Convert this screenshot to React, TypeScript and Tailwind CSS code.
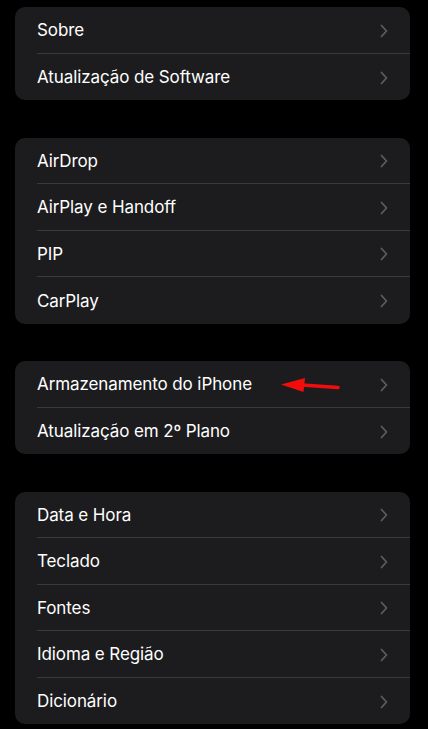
import React from 'react';

// Settings groups (Geral)
const groups: string[][] = [
  ['Sobre', 'Atualização de Software'],
  ['AirDrop', 'AirPlay e Handoff', 'PIP', 'CarPlay'],
  ['Armazenamento do iPhone', 'Atualização em 2º Plano'],
  ['Data e Hora', 'Teclado', 'Fontes', 'Idioma e Região', 'Dicionário'],
];

const Chevron: React.FC = () => (
  <svg width="8" height="14" viewBox="0 0 8 14" fill="none" className="shrink-0">
    <path d="M1.5 1.5L6.5 7L1.5 12.5" stroke="#5b5b60" strokeWidth="1.8" strokeLinecap="round" strokeLinejoin="round" />
  </svg>
);

// red annotation arrow drawn over the storage row
const RedArrow: React.FC = () => (
  <svg className="absolute left-[263px] top-[16px]" width="66" height="20" viewBox="0 0 66 20" fill="none">
    <path d="M24 8L60 10.5" stroke="#f20d0d" strokeWidth="3.6" strokeLinecap="round" />
    <path d="M3 7.5L27 1L25.5 15Z" fill="#f20d0d" />
  </svg>
);

const App: React.FC = () => {
  return (
    <div className="w-[428px] h-[729px] bg-black overflow-hidden pt-[7px] px-[15px] flex flex-col gap-[37.5px] font-['Inter','Liberation_Sans',sans-serif]">
      {groups.map((rows, gi) => (
        <div key={gi} className="w-[395px] bg-[#1c1c1e] rounded-[10px] overflow-hidden">
          {rows.map((label, ri) => (
            <div key={label} className="relative h-[46.5px] flex items-center pl-[22px]">
              <div className={`flex-1 h-full flex items-center pt-[2px] pr-[22px] ${ri < rows.length - 1 ? 'border-b-[0.5px] border-[#3a3a3c]' : ''}`}>
                <span className="flex-1 text-white text-[17px] tracking-[-0.1px] leading-none">{label}</span>
                <Chevron />
              </div>
              {gi === 2 && ri === 0 && <RedArrow />}
            </div>
          ))}
        </div>
      ))}
    </div>
  );
};

export default App;
